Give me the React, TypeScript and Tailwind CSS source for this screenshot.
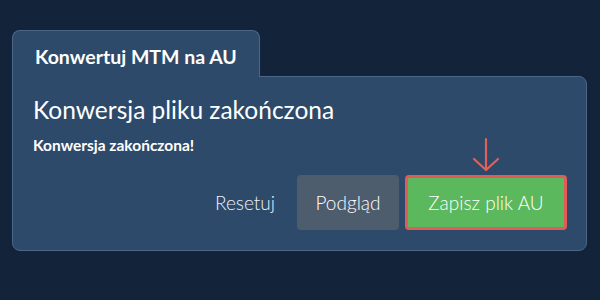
import React from 'react';

const App: React.FC = () => {
  return (
    <div className="w-[600px] h-[300px] bg-[#13233a] pt-[30px] pl-[12px] pr-[13px]" style={{ fontFamily: 'Lato, "Open Sans", sans-serif' }}>
      {/* Tab */}
      <div className="relative z-10 w-[248px] h-[47px] bg-[#2d4a6a] border border-b-0 border-[#4b6788] rounded-t-[8px] pl-[22px] pt-[11px]">
        <span className="text-[19.5px] font-bold text-white">Konwertuj MTM na AU</span>
      </div>

      {/* Card */}
      <div className="-mt-px h-[175px] bg-[#2d4a6a] border border-[#4b6788] rounded-b-[8px] rounded-tr-[8px] pl-[20px] pr-[19px] pt-[18px]">
        <h2 className="text-[24.5px] leading-[30px] text-white">Konwersja pliku zakończona</h2>
        <p className="mt-[9px] text-[15.5px] font-bold text-white">Konwersja zakończona!</p>

        <div className="mt-[18px] flex items-end justify-end gap-[6px]">
          <button className="h-[55px] px-[16px] text-[19px] font-light text-[#eef1f5]">Resetuj</button>
          <button className="h-[55px] w-[102px] rounded-[4px] bg-[#4e5d6e] text-[19px] font-light text-white">Podgląd</button>
          <div className="relative">
            <svg className="absolute left-1/2 -translate-x-1/2 -top-[38px]" width="28" height="36" viewBox="0 0 28 36" fill="none" stroke="#e0605a" strokeWidth="2.2" strokeLinecap="round" strokeLinejoin="round">
              <path d="M14 2 V33" />
              <path d="M2 22 L14 33 L26 22" />
            </svg>
            <button className="h-[55px] w-[162px] rounded-[4px] border-[3px] border-[#df5c58] bg-[#5cb85c] text-[19px] font-light text-white">Zapisz plik AU</button>
          </div>
        </div>
      </div>
    </div>
  );
};

export default App;
